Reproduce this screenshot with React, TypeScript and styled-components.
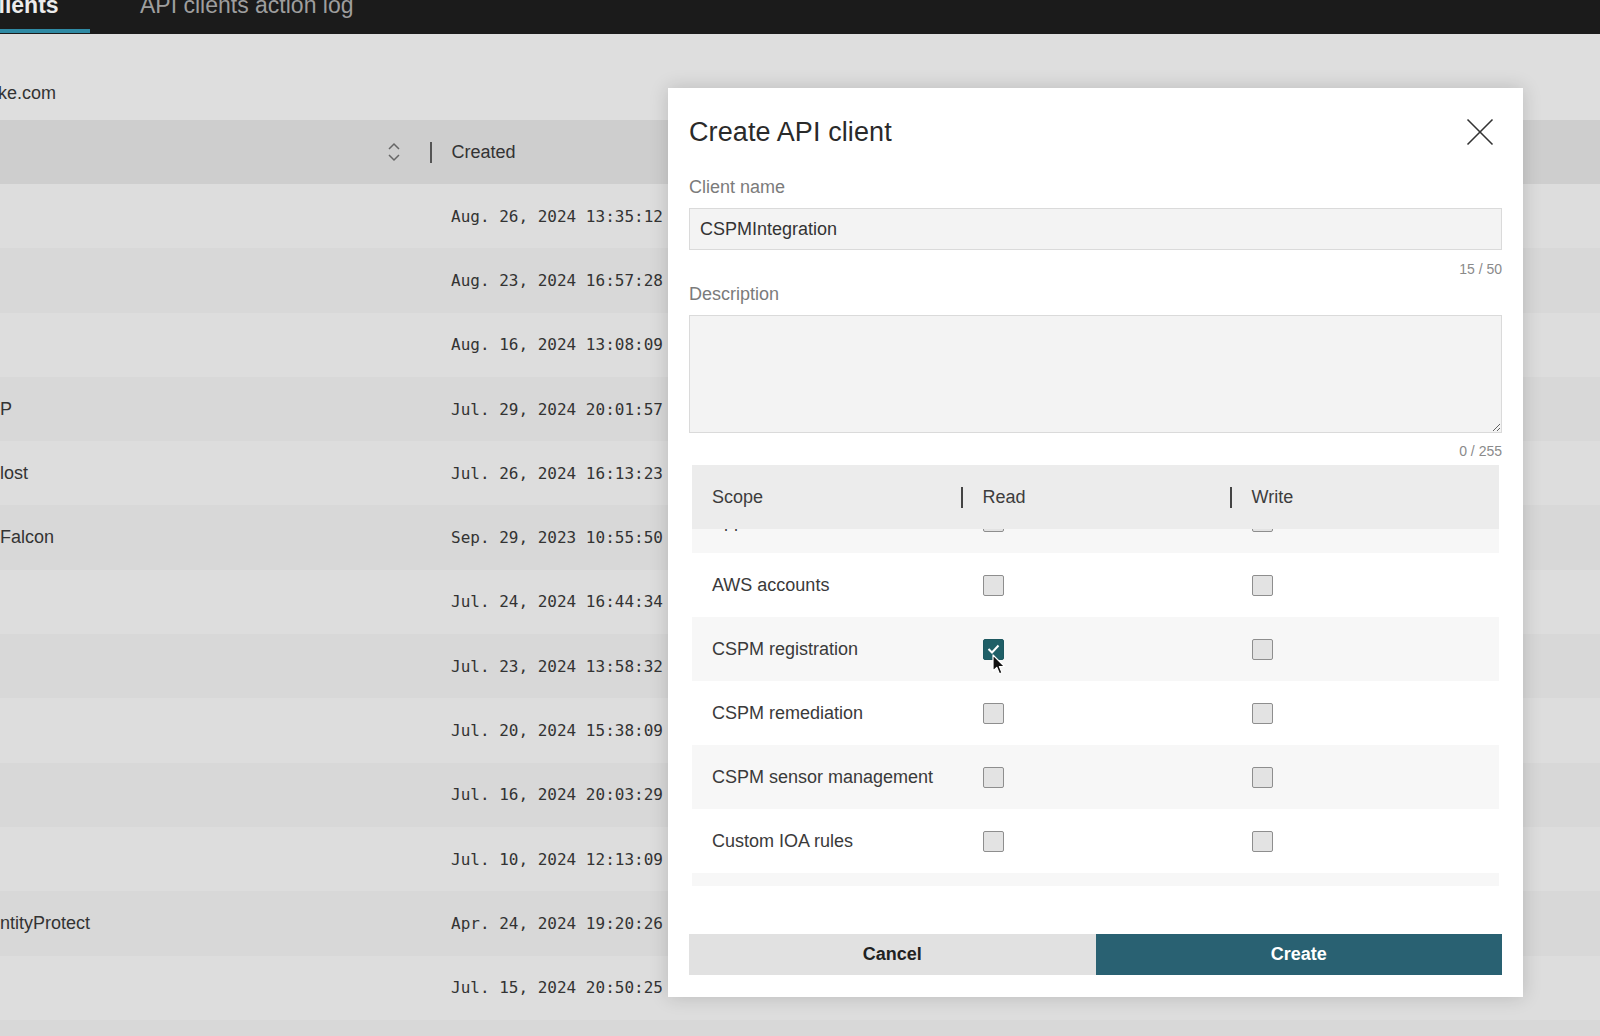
import React, { useEffect, useRef } from "react";
import styled, { createGlobalStyle } from "styled-components";

const GlobalStyle = createGlobalStyle`
  html, body { margin: 0; padding: 0; }
  body {
    width: 1600px;
    height: 1036px;
    overflow: hidden;
    background: #dedede;
    font-family: "Liberation Sans", Arial, sans-serif;
  }
  * { box-sizing: border-box; }
`;

const Page = styled.div`
  position: relative;
  width: 1600px;
  height: 1036px;
  overflow: hidden;
  background: #dedede;
  display: flex;
  flex-direction: column;
`;

const TopBar = styled.div`
  height: 34px;
  flex-shrink: 0;
  background: #1b1b1b;
  display: flex;
  align-items: flex-start;
  overflow: hidden;
`;

const Tab = styled.div<{ $active?: boolean }>`
  height: 33px;
  flex-shrink: 0;
  font-size: 23px;
  line-height: 23px;
  font-weight: ${(p) => (p.$active ? 700 : 400)};
  color: ${(p) => (p.$active ? "#ececec" : "#9e9e9e")};
  border-bottom: 4px solid ${(p) => (p.$active ? "#2f8aa4" : "transparent")};
  margin-left: ${(p) => (p.$active ? "-59px" : "50px")};
  width: ${(p) => (p.$active ? "149px" : "auto")};
  white-space: nowrap;
`;

const TabLabel = styled.span`
  display: block;
  margin-top: -6px;
`;

const SubHeader = styled.div`
  height: 86px;
  flex-shrink: 0;
  padding-top: 48px;
  font-size: 18px;
  line-height: 22px;
  color: #333;
`;

const Account = styled.span`
  display: block;
  margin-left: -2px;
`;

const ListHead = styled.div`
  height: 64px;
  flex-shrink: 0;
  background: #cecece;
  display: grid;
  grid-template-columns: 430px 1fr;
  align-items: center;
`;

const SortCell = styled.div`
  display: flex;
  justify-content: flex-end;
  padding-right: 29px;
  color: #666;
`;

const HeadTitle = styled.div`
  display: flex;
  align-items: center;
  font-size: 18px;
  color: #333;
`;

const VBar = styled.span<{ $gap: number; $color?: string }>`
  width: 1.5px;
  height: 21px;
  background: ${(p) => p.$color || "#555"};
  margin-right: ${(p) => p.$gap}px;
  flex-shrink: 0;
`;

const ListRow = styled.div<{ $shade: boolean }>`
  height: 64.3px;
  flex-shrink: 0;
  display: grid;
  grid-template-columns: 430px 1fr;
  align-items: center;
  background: ${(p) => (p.$shade ? "#d8d8d8" : "#dddddd")};
`;

const NameCell = styled.div`
  font-size: 18px;
  color: #333;
  white-space: nowrap;
`;

const DateCell = styled.div`
  padding-left: 21px;
  font-family: "DejaVu Sans Mono", "Liberation Mono", monospace;
  font-size: 16px;
  color: #333;
  white-space: nowrap;
`;

/* ---------- Modal ---------- */

const Modal = styled.div`
  position: absolute;
  left: 668px;
  top: 88px;
  width: 855px;
  height: 909px;
  background: #ffffff;
  box-shadow: 0 0 18px rgba(0, 0, 0, 0.16);
  padding: 0 21px 22px;
  display: flex;
  flex-direction: column;
`;

const ModalHeader = styled.div`
  padding-top: 28px;
  height: 60px;
  display: flex;
  align-items: center;
  justify-content: space-between;
`;

const Title = styled.h2`
  margin: 0;
  font-size: 27px;
  line-height: 32px;
  font-weight: 400;
  color: #2a2a2a;
  letter-spacing: 0.1px;
`;

const CloseButton = styled.button`
  width: 28px;
  height: 28px;
  margin-right: 8px;
  padding: 0;
  border: none;
  background: transparent;
  display: flex;
  align-items: center;
  justify-content: center;
  color: #333;
`;

const Label = styled.label<{ $top: number }>`
  display: block;
  margin-top: ${(p) => p.$top}px;
  font-size: 18px;
  line-height: 22px;
  color: #7b7b7b;
`;

const TextInput = styled.input`
  margin-top: 10px;
  width: 100%;
  height: 42px;
  border: 1px solid #dadada;
  background: #f3f3f3;
  padding: 0 10px;
  font-family: "Liberation Sans", Arial, sans-serif;
  font-size: 18px;
  color: #333;
  outline: none;
`;

const TextArea = styled.textarea`
  margin-top: 10px;
  width: 100%;
  height: 118px;
  border: 1px solid #dadada;
  background: #f3f3f3;
  padding: 10px;
  font-family: "Liberation Sans", Arial, sans-serif;
  font-size: 18px;
  color: #333;
  resize: vertical;
  outline: none;
  display: block;
`;

const Counter = styled.div<{ $top: number }>`
  margin-top: ${(p) => p.$top}px;
  text-align: right;
  font-size: 14px;
  line-height: 16px;
  color: #8a8a8a;
`;

const ScopeTable = styled.div`
  margin: 6px 3px 0 3px;
  display: flex;
  flex-direction: column;
`;

const ScopeHead = styled.div`
  height: 64px;
  background: #ececec;
  display: grid;
  grid-template-columns: 1fr 1fr 1fr;
  align-items: center;
`;

const ScopeHeadCell = styled.div<{ $first?: boolean }>`
  display: flex;
  align-items: center;
  padding-left: ${(p) => (p.$first ? "20px" : "0")};
  font-size: 18px;
  color: #3d3d3d;
`;

const ScopeBody = styled.div`
  height: 357px;
  overflow-y: auto;
  scrollbar-width: none;
  &::-webkit-scrollbar { display: none; }
`;

const ScopeRow = styled.div<{ $shade: boolean }>`
  height: 64px;
  display: grid;
  grid-template-columns: 1fr 1fr 1fr;
  align-items: center;
  background: ${(p) => (p.$shade ? "#f7f7f7" : "#ffffff")};
`;

const ScopeName = styled.div`
  padding-left: 20px;
  font-size: 18px;
  color: #3a3a3a;
  white-space: nowrap;
`;

const BoxCell = styled.div`
  position: relative;
  padding-left: 21.5px;
  display: flex;
  align-items: center;
`;

const Box = styled.span<{ $checked?: boolean }>`
  width: 21px;
  height: 21px;
  border-radius: 2px;
  border: 1.5px solid ${(p) => (p.$checked ? "#1d5860" : "#8e8e8e")};
  background: ${(p) => (p.$checked ? "#1f5f67" : "#e3e3e3")};
  display: flex;
  align-items: center;
  justify-content: center;
`;

const Pointer = styled.svg`
  position: absolute;
  left: 31px;
  top: 15px;
  pointer-events: none;
`;

const Buttons = styled.div`
  margin-top: 48px;
  display: grid;
  grid-template-columns: 1fr 1fr;
  height: 41px;
`;

const ActionButton = styled.button<{ $primary?: boolean }>`
  border: none;
  height: 41px;
  font-family: "Liberation Sans", Arial, sans-serif;
  font-size: 18px;
  font-weight: 700;
  background: ${(p) => (p.$primary ? "#296172" : "#e1e1e1")};
  color: ${(p) => (p.$primary ? "#ffffff" : "#222")};
`;

const rows: { name: string; date: string }[] = [
  { name: "", date: "Aug. 26, 2024 13:35:12" },
  { name: "", date: "Aug. 23, 2024 16:57:28" },
  { name: "", date: "Aug. 16, 2024 13:08:09" },
  { name: "P", date: "Jul. 29, 2024 20:01:57" },
  { name: "lost", date: "Jul. 26, 2024 16:13:23" },
  { name: "Falcon", date: "Sep. 29, 2023 10:55:50" },
  { name: "", date: "Jul. 24, 2024 16:44:34" },
  { name: "", date: "Jul. 23, 2024 13:58:32" },
  { name: "", date: "Jul. 20, 2024 15:38:09" },
  { name: "", date: "Jul. 16, 2024 20:03:29" },
  { name: "", date: "Jul. 10, 2024 12:13:09" },
  { name: "ntityProtect", date: "Apr. 24, 2024 19:20:26" },
  { name: "", date: "Jul. 15, 2024 20:50:25" },
  { name: "", date: "" },
];

const scopes: { name: string; read?: boolean }[] = [
  { name: "Apps" },
  { name: "AWS accounts" },
  { name: "CSPM registration", read: true },
  { name: "CSPM remediation" },
  { name: "CSPM sensor management" },
  { name: "Custom IOA rules" },
  { name: "Custom storage" },
];

const SortIcon = () => (
  <svg width="14" height="22" viewBox="0 0 14 22" fill="none" stroke="currentColor" strokeWidth="1.5">
    <path d="M2 8 L7 3 L12 8" />
    <path d="M2 14 L7 19 L12 14" />
  </svg>
);

const CloseIcon = () => (
  <svg width="28" height="28" viewBox="0 0 28 28" stroke="currentColor" strokeWidth="1.6" fill="none">
    <path d="M1.5 1.5 L26.5 26.5" />
    <path d="M26.5 1.5 L1.5 26.5" />
  </svg>
);

export default function App() {
  const bodyRef = useRef<HTMLDivElement>(null);
  useEffect(() => {
    if (bodyRef.current) bodyRef.current.scrollTop = 40;
  }, []);

  return (
    <>
      <GlobalStyle />
      <Page>
        <TopBar>
          <Tab $active>
            <TabLabel>API clients</TabLabel>
          </Tab>
          <Tab>
            <TabLabel>API clients action log</TabLabel>
          </Tab>
        </TopBar>
        <SubHeader>
          <Account>ke.com</Account>
        </SubHeader>
        <ListHead>
          <SortCell>
            <SortIcon />
          </SortCell>
          <HeadTitle>
            <VBar $gap={20} />
            Created
          </HeadTitle>
        </ListHead>
        {rows.map((r, i) => (
          <ListRow key={i} $shade={i % 2 === 1}>
            <NameCell>{r.name}</NameCell>
            <DateCell>{r.date}</DateCell>
          </ListRow>
        ))}

        <Modal role="dialog" aria-label="Create API client">
          <ModalHeader>
            <Title>Create API client</Title>
            <CloseButton aria-label="Close">
              <CloseIcon />
            </CloseButton>
          </ModalHeader>

          <Label $top={28}>Client name</Label>
          <TextInput defaultValue="CSPMIntegration" />
          <Counter $top={11}>15 / 50</Counter>

          <Label $top={6}>Description</Label>
          <TextArea />
          <Counter $top={10}>0 / 255</Counter>

          <ScopeTable>
            <ScopeHead>
              <ScopeHeadCell $first>Scope</ScopeHeadCell>
              <ScopeHeadCell>
                <VBar $gap={20} $color="#444" />
                Read
              </ScopeHeadCell>
              <ScopeHeadCell>
                <VBar $gap={20} $color="#444" />
                Write
              </ScopeHeadCell>
            </ScopeHead>
            <ScopeBody ref={bodyRef}>
              {scopes.map((s, i) => (
                <ScopeRow key={s.name} $shade={i % 2 === 0}>
                  <ScopeName>{s.name}</ScopeName>
                  <BoxCell>
                    <Box $checked={s.read}>
                      {s.read && (
                        <svg width="13" height="10" viewBox="0 0 13 10" fill="none" stroke="#fff" strokeWidth="2">
                          <path d="M1.5 5 L5 8.5 L11.5 1.5" />
                        </svg>
                      )}
                    </Box>
                    {s.read && (
                      <Pointer width="14" height="22" viewBox="0 0 14 22">
                        <path
                          d="M1 1 L1 17 L4.8 13.4 L7.4 19.8 L10 18.7 L7.4 12.5 L12.5 12.5 Z"
                          fill="#111"
                          stroke="#fff"
                          strokeWidth="1.2"
                          strokeLinejoin="round"
                        />
                      </Pointer>
                    )}
                  </BoxCell>
                  <BoxCell>
                    <Box />
                  </BoxCell>
                </ScopeRow>
              ))}
            </ScopeBody>
          </ScopeTable>

          <Buttons>
            <ActionButton>Cancel</ActionButton>
            <ActionButton $primary>Create</ActionButton>
          </Buttons>
        </Modal>
      </Page>
    </>
  );
}
